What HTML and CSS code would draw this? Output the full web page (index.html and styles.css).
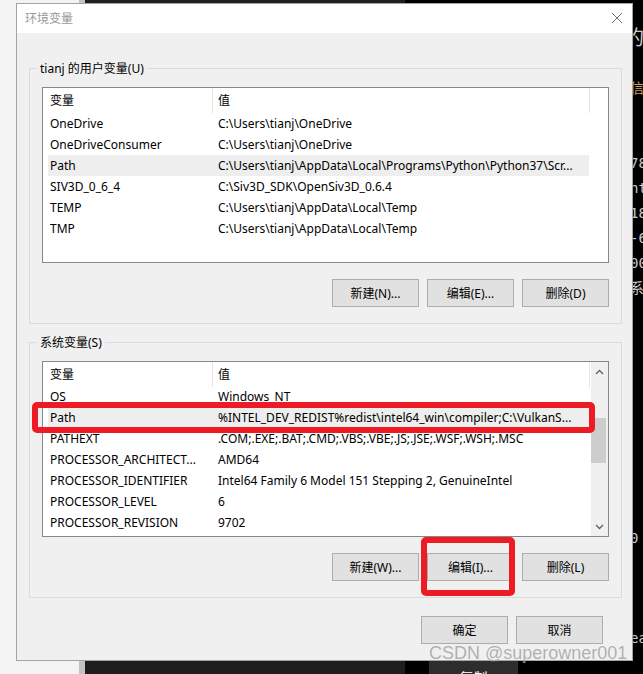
FILE: index.html
```html
<!DOCTYPE html>
<html lang="zh-CN">
<head>
    <meta charset="UTF-8">
    <meta name="viewport" content="width=device-width, initial-scale=1.0">
    <title>环境变量</title>
    <link rel="stylesheet" href="styles.css">
</head>
<body>
    <!-- windows behind the dialog -->
    <div class="bg-light"></div>
    <div class="bg-dark"></div>
    <div class="copy-tab">复制</div>
    <div class="console-edge">
        <div class="console-line big">的</div>
        <div class="console-line">&nbsp;</div>
        <div class="console-line gold">信</div>
        <div class="console-line">&nbsp;</div>
        <div class="console-line">&nbsp;</div>
        <div class="console-line">78</div>
        <div class="console-line">nte</div>
        <div class="console-line">18</div>
        <div class="console-line">-6</div>
        <div class="console-line">00</div>
        <div class="console-line">系</div>
        <div class="console-line">&nbsp;</div>
        <div class="console-line">&nbsp;</div>
        <div class="console-line">&nbsp;</div>
        <div class="console-line">&nbsp;</div>
        <div class="console-line">&nbsp;</div>
        <div class="console-line">&nbsp;</div>
        <div class="console-line">&nbsp;</div>
        <div class="console-line">&nbsp;</div>
        <div class="console-line">&nbsp;</div>
        <div class="console-line">0</div>
        <div class="console-line">&nbsp;</div>
        <div class="console-line">&nbsp;</div>
        <div class="console-line">&nbsp;</div>
        <div class="console-line">ea</div>
    </div>

    <div class="dialog">
        <div class="titlebar">
            <span class="title">环境变量</span>
            <svg class="close" width="12" height="12" viewBox="0 0 12 12">
                <path d="M1 1 L11 11 M11 1 L1 11" stroke="#707070" stroke-width="1" fill="none"/>
            </svg>
        </div>

        <div class="dialog-body">
            <div class="group">
                <div class="group-label">tianj 的用户变量(U)</div>
                <div class="list">
                    <div class="list-main">
                        <div class="list-head">
                            <div class="col-name">变量</div>
                            <div class="col-value">值</div>
                        </div>
                        <div class="rows">
                            <div class="row"><div class="cell-name">OneDrive</div><div class="cell-value">C:\Users\tianj\OneDrive</div></div>
                            <div class="row"><div class="cell-name">OneDriveConsumer</div><div class="cell-value">C:\Users\tianj\OneDrive</div></div>
                            <div class="row selected"><div class="cell-name">Path</div><div class="cell-value">C:\Users\tianj\AppData\Local\Programs\Python\Python37\Scr...</div></div>
                            <div class="row"><div class="cell-name">SIV3D_0_6_4</div><div class="cell-value">C:\Siv3D_SDK\OpenSiv3D_0.6.4</div></div>
                            <div class="row"><div class="cell-name">TEMP</div><div class="cell-value">C:\Users\tianj\AppData\Local\Temp</div></div>
                            <div class="row"><div class="cell-name">TMP</div><div class="cell-value">C:\Users\tianj\AppData\Local\Temp</div></div>
                        </div>
                    </div>
                </div>
                <div class="buttons">
                    <button class="btn">新建(N)...</button>
                    <button class="btn">编辑(E)...</button>
                    <button class="btn">删除(D)</button>
                </div>
            </div>

            <div class="group group-system">
                <div class="group-label">系统变量(S)</div>
                <div class="list">
                    <div class="list-main">
                        <div class="list-head">
                            <div class="col-name">变量</div>
                            <div class="col-value">值</div>
                        </div>
                        <div class="rows scrolled">
                            <div class="row"><div class="cell-name">OS</div><div class="cell-value">Windows_NT</div></div>
                            <div class="row selected"><div class="cell-name">Path</div><div class="cell-value">%INTEL_DEV_REDIST%redist\intel64_win\compiler;C:\VulkanS...</div></div>
                            <div class="row"><div class="cell-name">PATHEXT</div><div class="cell-value">.COM;.EXE;.BAT;.CMD;.VBS;.VBE;.JS;.JSE;.WSF;.WSH;.MSC</div></div>
                            <div class="row"><div class="cell-name">PROCESSOR_ARCHITECT...</div><div class="cell-value">AMD64</div></div>
                            <div class="row"><div class="cell-name">PROCESSOR_IDENTIFIER</div><div class="cell-value">Intel64 Family 6 Model 151 Stepping 2, GenuineIntel</div></div>
                            <div class="row"><div class="cell-name">PROCESSOR_LEVEL</div><div class="cell-value">6</div></div>
                            <div class="row"><div class="cell-name">PROCESSOR_REVISION</div><div class="cell-value">9702</div></div>
                            <div class="row"><div class="cell-name">PSModulePath</div><div class="cell-value">%ProgramFiles%\WindowsPowerShell\Modules</div></div>
                        </div>
                    </div>
                    <div class="scrollbar">
                        <svg class="arrow" width="9" height="6" viewBox="0 0 9 6">
                            <path d="M1 5 L4.5 1.5 L8 5" stroke="#606060" stroke-width="1.3" fill="none"/>
                        </svg>
                        <div class="track">
                            <div class="thumb"></div>
                        </div>
                        <svg class="arrow" width="9" height="6" viewBox="0 0 9 6">
                            <path d="M1 1 L4.5 4.5 L8 1" stroke="#606060" stroke-width="1.3" fill="none"/>
                        </svg>
                    </div>
                </div>
                <div class="buttons">
                    <button class="btn">新建(W)...</button>
                    <button class="btn">编辑(I)...</button>
                    <button class="btn">删除(L)</button>
                </div>
            </div>

            <div class="footer">
                <button class="btn">确定</button>
                <button class="btn">取消</button>
            </div>
        </div>
    </div>

    <!-- red marks drawn over the screenshot -->
    <div class="mark mark-row"></div>
    <div class="mark mark-button"></div>

    <div class="watermark">CSDN @superowner001</div>
</body>
</html>
```

FILE: styles.css
```css
* {
    box-sizing: border-box;
}

body {
    margin: 0;
    width: 643px;
    height: 674px;
    overflow: hidden;
    position: relative;
    background-color: #000;
    font-family: "Noto Sans", "Noto Sans CJK SC", sans-serif;
    font-size: 12px;
    color: #000;
}

/* background windows */

.bg-light {
    position: absolute;
    left: 0;
    top: 0;
    width: 85px;
    height: 674px;
    background-color: #f3f3f3;
    border-right: 6px solid #c2c2c2;
}

.bg-dark {
    position: absolute;
    left: 85px;
    top: 0;
    width: 320px;
    height: 674px;
    background-color: #1e1e1e;
}

.copy-tab {
    position: absolute;
    left: 429px;
    top: 661px;
    width: 89px;
    height: 30px;
    padding-top: 6px;
    background-color: #2d2d2d;
    color: #fff;
    font-size: 14px;
    text-align: center;
}

.console-edge {
    position: absolute;
    left: 630px;
    top: 26px;
    width: 20px;
    color: #cccccc;
    font-family: "DejaVu Sans Mono", monospace;
    font-size: 14px;
}

.console-line {
    height: 25px;
    line-height: 25px;
    white-space: nowrap;
}

.console-line.big {
    font-size: 20px;
    margin-left: -6px;
}

.console-line.gold {
    color: #c8a163;
}

/* dialog */

.dialog {
    position: absolute;
    left: 16px;
    top: 3px;
    width: 617px;
    border: 1px solid #a3a3a3;
    background-color: #f0f0f0;
}

.titlebar {
    height: 29px;
    background-color: #fff;
    display: flex;
    align-items: center;
    justify-content: space-between;
    padding: 0 9px 1px 8px;
}

.title {
    color: #999;
    font-size: 12px;
}

.close {
    display: block;
}

.dialog-body {
    padding: 35px 10px 16px 12px;
}

.group {
    border: 1px solid #dcdcdc;
    padding: 0 12px 16px 12px;
}

.group-system {
    margin-top: 18px;
}

.group-label {
    width: fit-content;
    margin: -8px 0 10px -5px;
    padding: 0 3px;
    height: 16px;
    line-height: 16px;
    background-color: #f0f0f0;
}

.list {
    height: 176px;
    border: 1px solid #828790;
    background-color: #fff;
    display: flex;
    overflow: hidden;
}

.list-main {
    flex: 1;
    overflow: hidden;
}

.list-head {
    display: flex;
    height: 25px;
    line-height: 25px;
}

.list-head .col-name {
    width: 170px;
    padding-left: 7px;
    border-right: 1px solid #e5e5e5;
}

.list-head .col-value {
    width: 377px;
    padding-left: 5px;
    border-right: 1px solid #e5e5e5;
}

.rows.scrolled {
    margin-top: -1px;
}

.row {
    display: flex;
    width: 541px;
    margin-left: 5px;
    height: 21px;
    line-height: 20px;
    padding-top: 1px;
    white-space: nowrap;
}

.row.selected {
    background-color: #eeeeee;
}

.cell-name {
    width: 165px;
    padding-left: 2px;
    overflow: hidden;
}

.cell-value {
    width: 376px;
    padding-left: 5px;
    overflow: hidden;
}

.scrollbar {
    width: 17px;
    background-color: #f0f0f0;
    display: flex;
    flex-direction: column;
    align-items: center;
}

.scrollbar .arrow {
    display: block;
    margin: 7px 0 4px;
}

.scrollbar .arrow:last-child {
    margin: 4px 0 6px;
}

.track {
    flex: 1;
    width: 100%;
    padding-top: 39px;
}

.thumb {
    width: 15px;
    height: 45px;
    background-color: #cdcdcd;
}

.buttons {
    display: flex;
    justify-content: flex-end;
    gap: 8px;
    margin-top: 16px;
}

.btn {
    width: 87px;
    height: 28px;
    padding: 0;
    border: 1px solid #adadad;
    background-color: #e1e1e1;
    font-family: "Noto Sans", "Noto Sans CJK SC", sans-serif;
    font-size: 12px;
    color: #000;
}

.footer {
    display: flex;
    justify-content: flex-end;
    gap: 8px;
    margin-top: 18px;
    padding-right: 19px;
}

/* annotations */

.mark {
    position: absolute;
    border: 6px solid #ed1c24;
    border-radius: 5px;
}

.mark-row {
    left: 32px;
    top: 402px;
    width: 563px;
    height: 31px;
}

.mark-button {
    left: 421px;
    top: 537px;
    width: 94px;
    height: 59px;
}

.watermark {
    position: absolute;
    left: 429px;
    top: 643px;
    font-family: "Liberation Sans", Arial, sans-serif;
    font-size: 18px;
    line-height: 21px;
    color: rgba(110, 110, 110, 0.55);
    text-shadow: 0 0 1px rgba(255, 255, 255, 0.8);
    white-space: nowrap;
}
```
